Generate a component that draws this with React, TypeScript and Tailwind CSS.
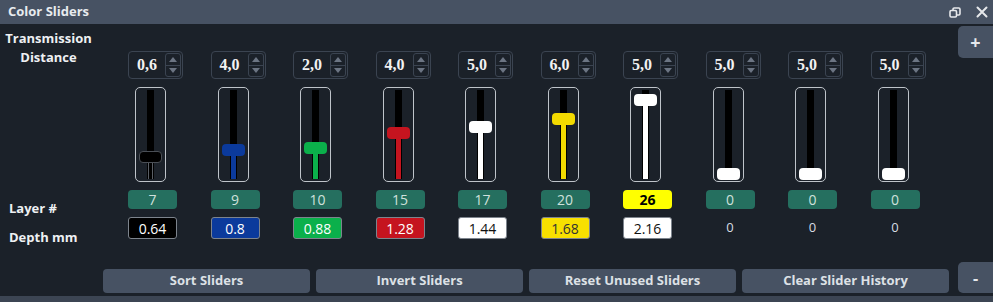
import React from 'react';

const columns = [
  { dist: '0,6', layer: '7', depth: '0.64', color: '#000000', depthBg: '#000000', depthText: '#ffffff', top: 63 },
  { dist: '4,0', layer: '9', depth: '0.8', color: '#0b3a9c', depthBg: '#0b3a9c', depthText: '#ffffff', top: 56 },
  { dist: '2,0', layer: '10', depth: '0.88', color: '#0bb04b', depthBg: '#0bb04b', depthText: '#ffffff', top: 54 },
  { dist: '4,0', layer: '15', depth: '1.28', color: '#c5141f', depthBg: '#c5141f', depthText: '#ffffff', top: 39 },
  { dist: '5,0', layer: '17', depth: '1.44', color: '#ffffff', depthBg: '#ffffff', depthText: '#111111', top: 33 },
  { dist: '6,0', layer: '20', depth: '1.68', color: '#f3da00', depthBg: '#f7e000', depthText: '#333333', top: 25 },
  { dist: '5,0', layer: '26', depth: '2.16', color: '#ffffff', depthBg: '#ffffff', depthText: '#111111', top: 6, active: true },
  { dist: '5,0', layer: '0', depth: '0', color: '#ffffff', depthBg: null, depthText: '#d8dde3', top: 80 },
  { dist: '5,0', layer: '0', depth: '0', color: '#ffffff', depthBg: null, depthText: '#d8dde3', top: 80 },
  { dist: '5,0', layer: '0', depth: '0', color: '#ffffff', depthBg: null, depthText: '#d8dde3', top: 80 },
];

const buttons = ['Sort Sliders', 'Invert Sliders', 'Reset Unused Sliders', 'Clear Slider History'];

function SpinBox({ value }: { value: string }) {
  return (
    <div className="flex h-[28px] w-[55px] rounded-[4px] border border-[#3b4451]">
      <div className="flex flex-1 items-center pl-[8px] text-[16px] font-bold text-[#f2f2f2]" style={{ fontFamily: '"Liberation Serif", serif' }}>
        {value}
      </div>
      <div className="my-[1px] mr-[1px] flex w-[16px] flex-col rounded-[3px] border border-[#3b4451]">
        <div className="flex flex-1 items-center justify-center border-b border-[#3b4451]">
          <svg width="8" height="5" viewBox="0 0 8 5">
            <path d="M0 5 L4 0 L8 5 Z" fill="#6c7583" />
          </svg>
        </div>
        <div className="flex flex-1 items-center justify-center">
          <svg width="8" height="5" viewBox="0 0 8 5">
            <path d="M0 0 L4 5 L8 0 Z" fill="#6c7583" />
          </svg>
        </div>
      </div>
    </div>
  );
}

function Slider({ color, top }: { color: string; top: number }) {
  const black = color === '#000000';
  return (
    <div className="relative ml-[7px] mt-[8px] h-[95px] w-[31px] rounded-[5px] border border-[#bfc4ca]">
      <div className="absolute bottom-[2px] left-[11px] top-[2px] w-[7px] bg-black" />
      <div
        className={`absolute bottom-[2px] left-[12px] w-[5px] ${black ? 'border-x border-[#5a5f66]' : ''}`}
        style={{ top: top + 6, backgroundColor: color }}
      />
      <div
        className={`absolute left-[3px] h-[12px] w-[23px] rounded-[4px] ${black ? 'border border-[#4a4f56]' : ''}`}
        style={{ top, backgroundColor: color }}
      />
    </div>
  );
}

export default function App() {
  return (
    <div className="flex h-[302px] w-[993px] flex-col overflow-hidden bg-[#1b2129] text-[13px]" style={{ fontFamily: '"Open Sans", sans-serif' }}>
      <div className="flex h-[24px] shrink-0 items-center justify-between bg-[#475263] pl-[8px] pr-[5px]">
        <span className="font-bold text-[#e8ebef]">Color Sliders</span>
        <div className="flex items-center gap-[15px]">
          <svg width="12" height="11" viewBox="0 0 12 11" fill="none" stroke="#e6e8eb" strokeWidth="1.6">
            <rect x="1" y="3.5" width="6.5" height="6.5" rx="1.2" />
            <path d="M4 3.5 V2.2 A1.2 1.2 0 0 1 5.2 1 H9.8 A1.2 1.2 0 0 1 11 2.2 V6.8 A1.2 1.2 0 0 1 9.8 8 H7.5" />
          </svg>
          <svg width="12" height="12" viewBox="0 0 12 12" stroke="#e6e8eb" strokeWidth="2" strokeLinecap="round">
            <path d="M1.5 1.5 L10.5 10.5 M10.5 1.5 L1.5 10.5" />
          </svg>
        </div>
      </div>

      <div className="flex flex-1">
        <div className="flex flex-1 flex-col">
          <div className="flex">
            <div className="w-[128px] shrink-0 font-bold text-[#eef0f3]">
              <div className="w-[97px] pt-[5px] text-center leading-[19px]">
                <div>Transmission</div>
                <div>Distance</div>
              </div>
              <div className="mt-[132px] pl-[9px] leading-[19px]">Layer #</div>
              <div className="mt-[10px] pl-[9px] leading-[19px]">Depth mm</div>
            </div>
            <div className="grid w-[825px] grid-cols-10">
              {columns.map((c, i) => (
                <div key={i} className="flex flex-col items-start pt-[27px]">
                  <SpinBox value={c.dist} />
                  <Slider color={c.color} top={c.top} />
                  <div
                    className={`mt-[8px] flex h-[19px] w-[49px] items-center justify-center rounded-[4px] text-[14px] ${
                      c.active ? 'bg-[#ffff00] font-bold text-black' : 'bg-[#256f5f] text-[#cfe1dc]'
                    }`}
                  >
                    {c.layer}
                  </div>
                  {c.depthBg ? (
                    <div
                      className="mt-[8px] flex h-[22px] w-[49px] items-center justify-center rounded-[3px] border border-[#7d848d] text-[14px]"
                      style={{ backgroundColor: c.depthBg, color: c.depthText }}
                    >
                      {c.depth}
                    </div>
                  ) : (
                    <div className="mt-[8px] flex h-[22px] w-[49px] items-center justify-center text-[13px] text-[#d8dde3]">
                      {c.depth}
                    </div>
                  )}
                </div>
              ))}
            </div>
          </div>
          <div className="mb-[3px] ml-[103px] mt-auto flex h-[24px] gap-[6px]">
            {buttons.map((b) => (
              <div key={b} className="flex w-[207px] items-center justify-center rounded-[4px] bg-[#475263] font-bold text-[#dde1e6]">
                {b}
              </div>
            ))}
          </div>
        </div>
        <div className="flex w-[35px] shrink-0 flex-col">
          <div className="mt-[2px] flex h-[32px] items-center justify-center rounded-l-[5px] bg-[#475263] text-[18px] font-bold text-[#e6e9ed]">
            +
          </div>
          <div className="mb-[3px] mt-auto flex h-[31px] items-center justify-center rounded-l-[5px] bg-[#475263] text-[16px] font-bold text-[#e6e9ed]">
            -
          </div>
        </div>
      </div>
      <div className="h-[6px] shrink-0 bg-[#3c4553]" />
    </div>
  );
}
